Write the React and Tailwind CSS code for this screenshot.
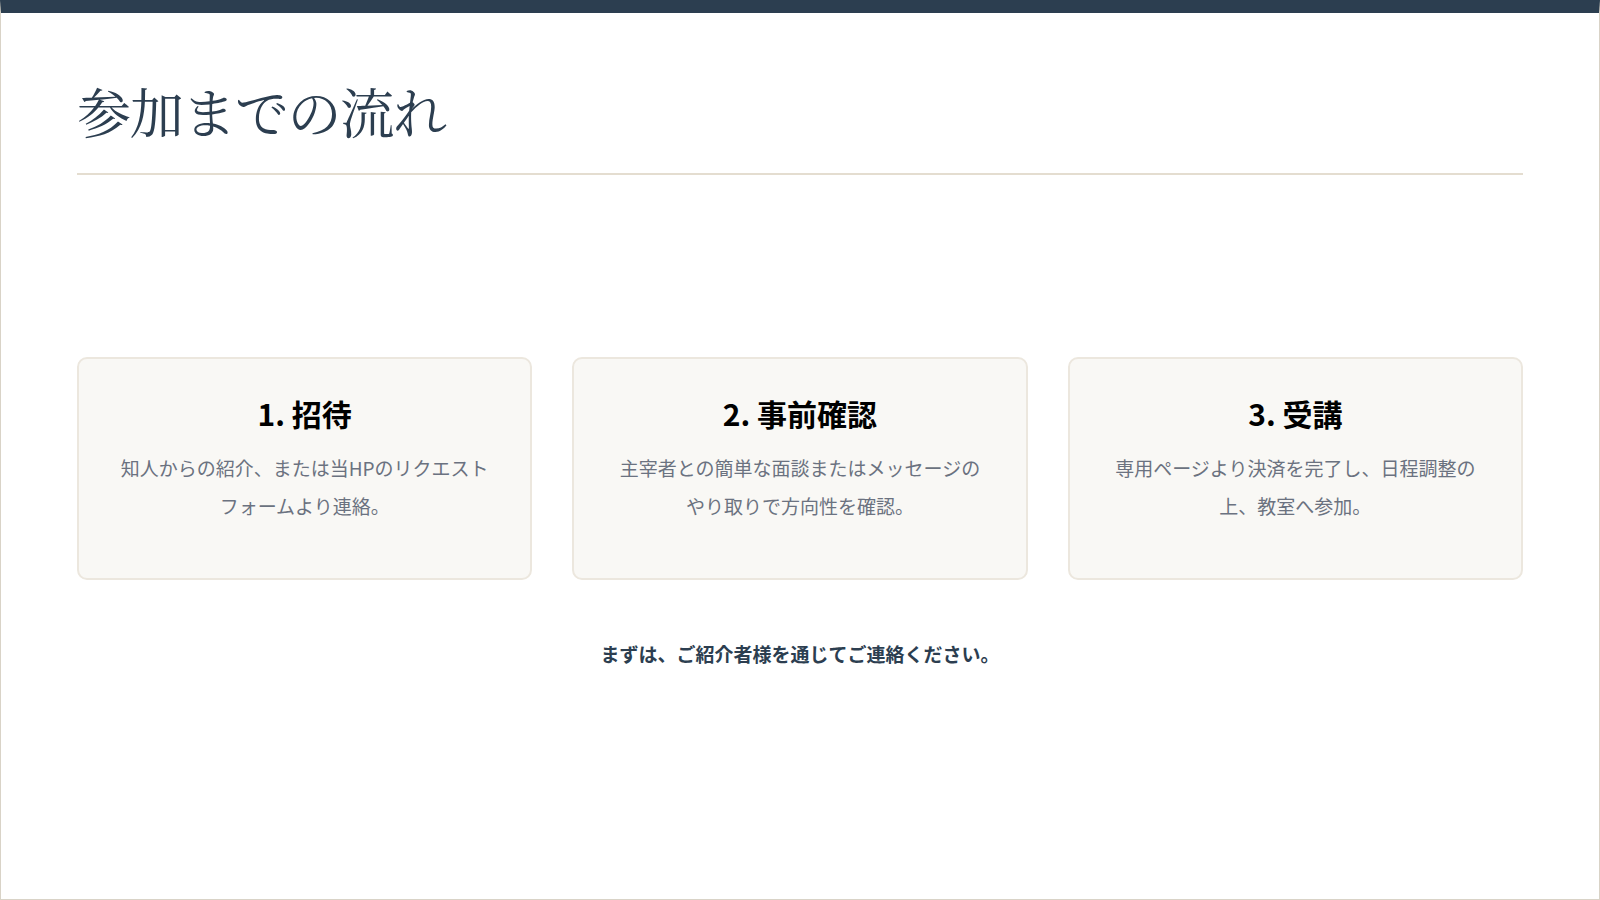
export default function App() {
  const steps = [
    { title: "1. 招待", body: "知人からの紹介、または当HPのリクエストフォームより連絡。" },
    { title: "2. 事前確認", body: "主宰者との簡単な面談またはメッセージのやり取りで方向性を確認。" },
    { title: "3. 受講", body: "専用ページより決済を完了し、日程調整の上、教室へ参加。" },
  ];
  const sans = { fontFamily: '"Noto Sans CJK JP", "Noto Sans", sans-serif' };
  return (
    <div className="w-[1600px] h-[900px] bg-white border border-[#d9d3c7] border-t-[13px] border-t-[#2c3e50] flex flex-col px-[76px]" style={sans}>
      <h1 className="mt-[63px] text-[54px] leading-[70px] text-[#2c3e50] font-normal tracking-tight" style={{ fontFamily: '"Noto Serif CJK JP", "Noto Sans CJK JP", serif' }}>
        参加までの流れ
      </h1>
      <div className="mt-[27px] h-[2px] bg-[#e4ddd0]" />
      <div className="mt-[182px] grid grid-cols-3 gap-[40px]">
        {steps.map((s) => (
          <div key={s.title} className="h-[223px] bg-[#f9f8f5] border-2 border-[#ece7de] rounded-[10px] flex flex-col items-center px-[40px] pt-[30px]">
            <div className="text-[30px] font-bold text-black leading-[48px]">{s.title}</div>
            <p className="mt-[12px] text-[19px] leading-[38px] text-[#6b7280] text-center">{s.body}</p>
          </div>
        ))}
      </div>
      <p className="mt-[60px] text-center text-[19px] font-bold text-[#2c3e50]">まずは、ご紹介者様を通じてご連絡ください。</p>
    </div>
  );
}
